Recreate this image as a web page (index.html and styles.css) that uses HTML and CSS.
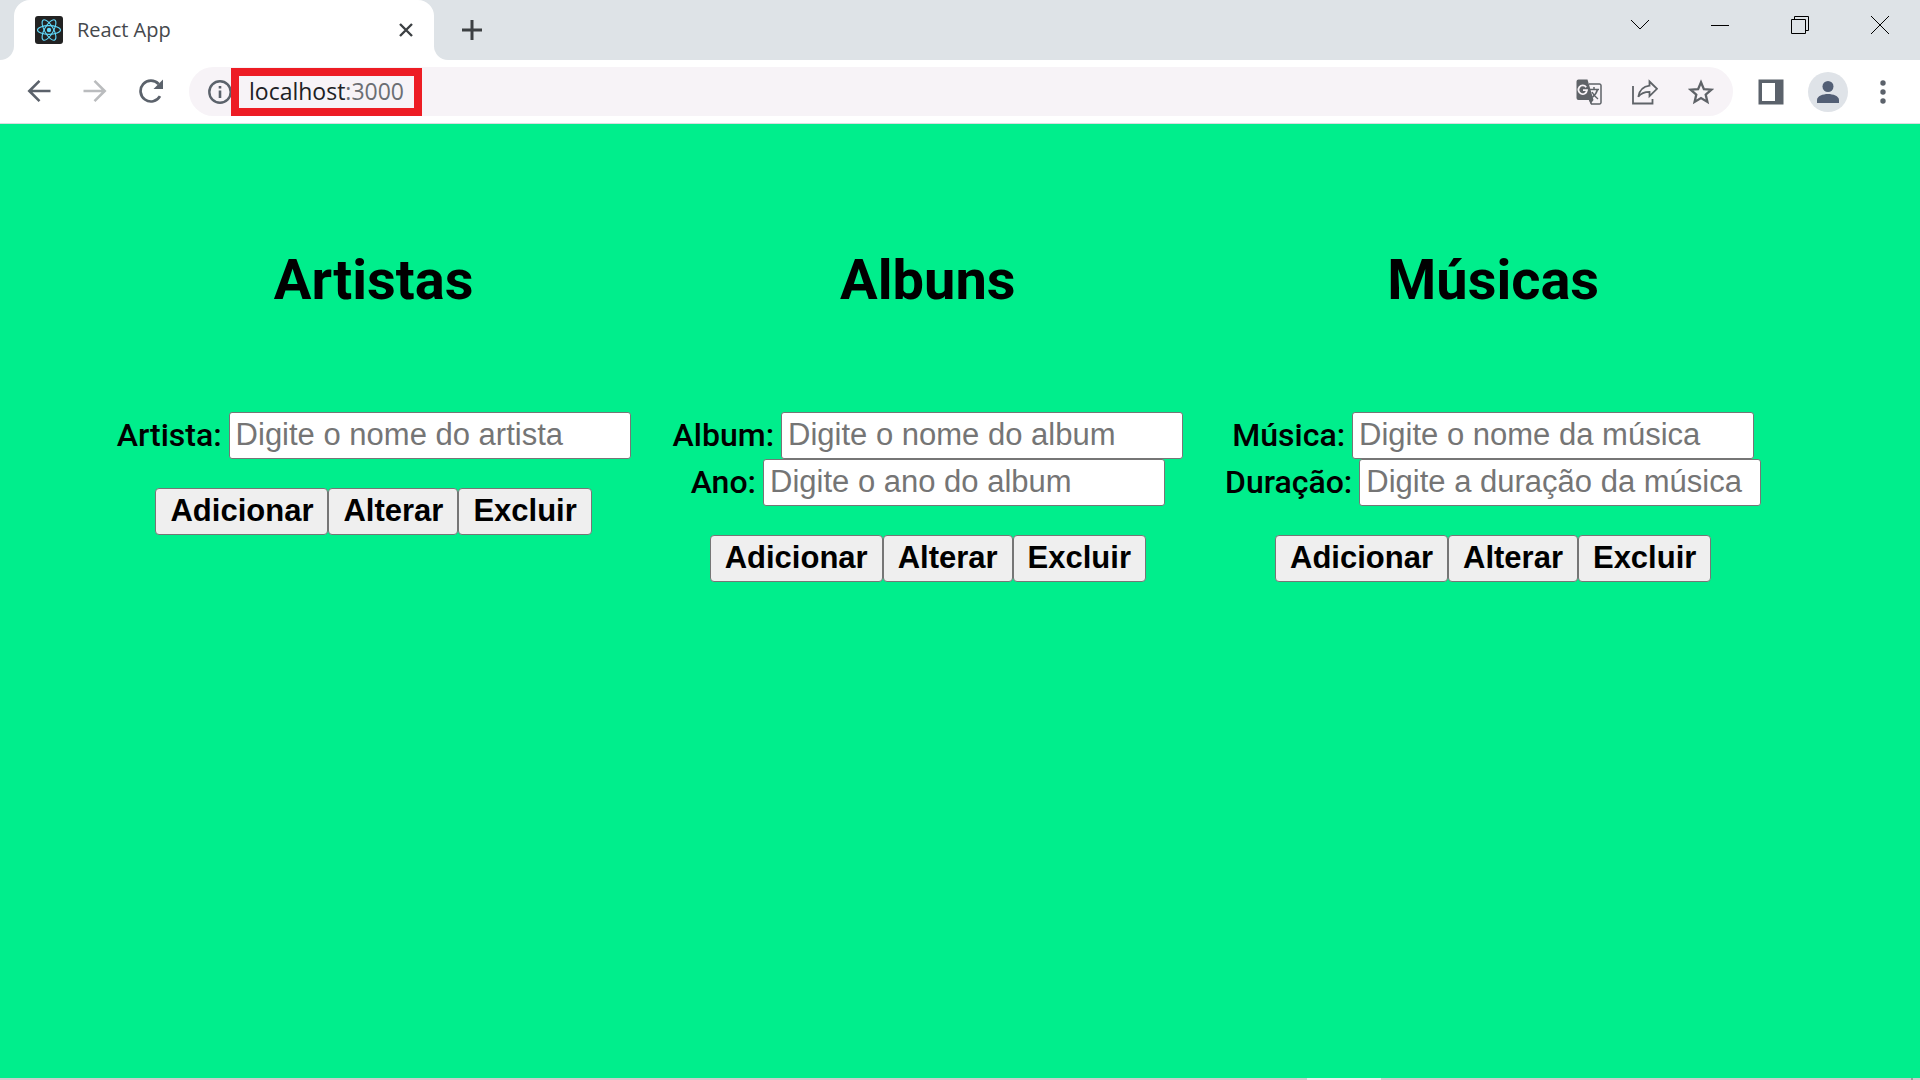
FILE: index.html
```html
<!DOCTYPE html>
<html lang="pt-BR">
<head>
<meta charset="utf-8">
<title>React App</title>
<link rel="stylesheet" href="styles.css">
</head>
<body>
<div class="browser">
  <header class="tabstrip">
    <div class="tab-edge"></div>
    <div class="tab">
      <svg class="favicon" viewBox="0 0 28 28" aria-hidden="true">
        <rect width="28" height="28" rx="3" fill="#222"/>
        <g fill="none" stroke="#61dafb" stroke-width="1.1">
          <ellipse cx="14" cy="14" rx="11.5" ry="4.4"/>
          <ellipse cx="14" cy="14" rx="11.5" ry="4.4" transform="rotate(60 14 14)"/>
          <ellipse cx="14" cy="14" rx="11.5" ry="4.4" transform="rotate(120 14 14)"/>
        </g>
        <circle cx="14" cy="14" r="2.2" fill="#61dafb"/>
      </svg>
      <span class="tab-title">React App</span>
      <button class="icon-button" aria-label="Fechar guia">
        <svg width="14" height="14" viewBox="0 0 14 14"><path d="M1 1l12 12M13 1L1 13" stroke="#3c4043" stroke-width="2.4" fill="none"/></svg>
      </button>
    </div>
    <button class="icon-button new-tab" aria-label="Nova guia">
      <svg width="22" height="22" viewBox="0 0 22 22"><path d="M11 1v20M1 11h20" stroke="#3c4043" stroke-width="3" fill="none"/></svg>
    </button>
    <div class="window-controls">
      <button class="icon-button" aria-label="Pesquisar guias"><svg width="20" height="20" viewBox="0 0 20 20"><path d="M1 5l9 9 9-9" stroke="#000" fill="none"/></svg></button>
      <button class="icon-button" aria-label="Minimizar"><svg width="20" height="20" viewBox="0 0 20 20"><path d="M1 10.500h18" stroke="#000" fill="none"/></svg></button>
      <button class="icon-button" aria-label="Restaurar"><svg width="20" height="20" viewBox="0 0 20 20"><path d="M1.500 4.500h14v14h-14zM4.500 4.500v-3h14v14h-3" stroke="#000" fill="none"/></svg></button>
      <button class="icon-button" aria-label="Fechar"><svg width="20" height="20" viewBox="0 0 20 20"><path d="M1 1l18 18M19 1L1 19" stroke="#000" fill="none"/></svg></button>
    </div>
  </header>
  <nav class="toolbar">
    <div class="nav-buttons">
      <button class="icon-button" aria-label="Voltar"><svg width="24" height="24" viewBox="0 0 24 24"><path d="M23.500 12H2.500M12.500 1.800L2.300 12l10.200 10.200" stroke="#5b626b" stroke-width="2.600" fill="none"/></svg></button>
      <button class="icon-button" aria-label="Avançar"><svg width="24" height="24" viewBox="0 0 24 24"><path d="M.5 12h21M11.500 1.800L21.700 12 11.500 22.200" stroke="#babcbe" stroke-width="2.600" fill="none"/></svg></button>
      <button class="icon-button" aria-label="Atualizar"><svg width="24" height="24" viewBox="0 0 24 24"><path d="M21 17.200A10.400 10.400 0 1 1 19.600 5" stroke="#5b626b" stroke-width="2.700" fill="none"/><path d="M24 .5V10h-9.500z" fill="#5b626b"/></svg></button>
    </div>
    <div class="omnibox">
      <svg class="info" width="24" height="24" viewBox="0 0 24 24" aria-hidden="true"><circle cx="12" cy="12" r="10.700" stroke="#5b626b" stroke-width="2.400" fill="none"/><path d="M12 10.500v7.500M12 6v2.600" stroke="#5b626b" stroke-width="2.600"/></svg>
      <div class="url"><span class="host">localhost</span>:3000</div>
      <div class="page-actions">
        <button class="icon-button" aria-label="Traduzir"><svg width="26" height="26" viewBox="0 0 26 26"><path d="M13 5h10.500a1.500 1.500 0 0 1 1.500 1.500v17a1.500 1.500 0 0 1-1.500 1.500H15.500l-2-4" fill="none" stroke="#5f6368" stroke-width="1.500"/><path d="M2.500.5h9L17.500 21h-15A2 2 0 0 1 .5 19V2.500a2 2 0 0 1 2-2z" fill="#5f6368"/><path d="M13.500 21h4l-3 4z" fill="#5f6368"/><path d="M10.200 8.200A4.300 4.300 0 1 0 11 11.200H7" fill="none" stroke="#f7f3f7" stroke-width="1.800"/><path d="M14 10.500h9M18 8v2.500M21.500 10.500c-.8 3.500-3 6-5.200 7.800M16 13c1.500 3 3.200 5 6 7" fill="none" stroke="#5f6368" stroke-width="1.500"/></svg></button>
        <button class="icon-button" aria-label="Compartilhar"><svg width="26" height="26" viewBox="0 0 26 26"><path d="M1 7v17.500h19.500V20" fill="none" stroke="#5f6368" stroke-width="1.800"/><path d="M17.500 2.500l7.500 7.300-7.500 7.300v-4.200c-5 0-8.500 1.300-11.200 4.900C7.300 12 11 7.500 17.500 6.700z" fill="none" stroke="#5f6368" stroke-width="1.800"/></svg></button>
        <button class="icon-button" aria-label="Favoritar"><svg width="26" height="26" viewBox="0 0 26 26"><path d="M13 3.200l2.900 6.900 7.500.6-5.700 4.900 1.700 7.300-6.400-3.900-6.400 3.900 1.700-7.300-5.700-4.900 7.500-.6z" fill="none" stroke="#5f6368" stroke-width="2.300"/></svg></button>
      </div>
    </div>
    <div class="browser-actions">
      <button class="icon-button" aria-label="Painel lateral"><svg width="26" height="26" viewBox="0 0 26 26"><path fill-rule="evenodd" d="M.5.500h25v25H.5zM4 4v18h13V4z" fill="#5b626b"/></svg></button>
      <button class="icon-button avatar" aria-label="Perfil"><svg width="22" height="22" viewBox="0 0 22 22"><circle cx="11" cy="5.500" r="5.500" fill="#535f75"/><path d="M0 22v-3c0-4 6-6 11-6s11 2 11 6v3z" fill="#535f75"/></svg></button>
      <button class="icon-button menu" aria-label="Menu"><svg width="6" height="24" viewBox="0 0 6 24"><g fill="#5b626b"><circle cx="3" cy="3" r="2.700"/><circle cx="3" cy="12" r="2.700"/><circle cx="3" cy="21" r="2.700"/></g></svg></button>
    </div>
  </nav>
  <main class="page">
    <section class="form">
      <h1>Artistas</h1>
      <div class="field"><label for="artista">Artista:</label><input id="artista" type="text" placeholder="Digite o nome do artista"></div>
      <div class="actions"><button>Adicionar</button><button>Alterar</button><button>Excluir</button></div>
    </section>
    <section class="form">
      <h1>Albuns</h1>
      <div class="field"><label for="album">Album:</label><input id="album" type="text" placeholder="Digite o nome do album"></div>
      <div class="field"><label for="ano">Ano:</label><input id="ano" type="text" placeholder="Digite o ano do album"></div>
      <div class="actions"><button>Adicionar</button><button>Alterar</button><button>Excluir</button></div>
    </section>
    <section class="form">
      <h1>Músicas</h1>
      <div class="field"><label for="musica">Música:</label><input id="musica" type="text" placeholder="Digite o nome da música"></div>
      <div class="field"><label for="duracao">Duração:</label><input id="duracao" type="text" placeholder="Digite a duração da música"></div>
      <div class="actions"><button>Adicionar</button><button>Alterar</button><button>Excluir</button></div>
    </section>
  </main>
  <footer class="taskbar"><div class="task-active"></div><div class="task-peek"></div></footer>
</div>
</body>
</html>
```
FILE: styles.css
```css
* { box-sizing: border-box; }
body { margin: 0; font-family: Roboto, sans-serif; }
.browser { display: flex; flex-direction: column; min-height: 100vh; }

.icon-button {
  display: flex; align-items: center; justify-content: center;
  padding: 0; border: 0; background: none;
}
.icon-button svg { display: block; }

.tabstrip { display: flex; height: 60px; background: #dee3e7; }
.tab-edge { width: 14px; background: #fff; }
.tab-edge::before {
  content: ""; display: block; height: 60px;
  background: #dee3e7; border-bottom-right-radius: 14px;
}
.tab {
  display: flex; align-items: center; gap: 14px; width: 420px;
  padding: 0 21px; background: #fff; border-radius: 16px 16px 0 0;
}
.favicon { width: 28px; height: 28px; }
.tab-title {
  flex: 1; padding-bottom: 2px; color: #45484c;
  font-family: "Open Sans", sans-serif; font-size: 20px; font-weight: 400;
}
.new-tab { width: 76px; background: linear-gradient(#fff, #fff) left bottom / 14px 14px no-repeat; position: relative; }
.new-tab::before {
  content: ""; position: absolute; left: 0; bottom: 0; width: 14px; height: 14px;
  background: #dee3e7; border-bottom-left-radius: 14px;
}
.window-controls { display: flex; height: 50px; margin-left: auto; }
.window-controls .icon-button { width: 80px; }

.toolbar {
  display: flex; align-items: center; height: 64px;
  padding: 0 34px 0 27px; border-bottom: 1px solid #dadce0; background: #fff;
}
.nav-buttons { display: flex; gap: 32px; width: 162px; padding-bottom: 2px; }
.omnibox {
  display: flex; flex: 1; align-items: center; height: 49px;
  padding: 0 19px; border-radius: 25px; background: #f7f3f7;
}
.url {
  height: 48px; padding: 0 10px; margin-left: -1px; z-index: 1;
  border: 8px solid #ed1c24; color: #6b6e73; background: #f7f3f7;
  font-family: "Open Sans", sans-serif; font-size: 23px; line-height: 30px;
}
.host { color: #202124; }
.page-actions { display: flex; gap: 30px; margin-left: auto; }
.browser-actions { display: flex; align-items: center; gap: 24px; margin-left: 25px; }
.avatar { width: 40px; height: 40px; border-radius: 50%; background: #dfe3e8; }
.menu { margin-left: 8px; }

.page {
  display: flex; flex: 1; justify-content: center; align-items: flex-start;
  background: #00ee8c;
}
.form { margin-right: 42px; text-align: center; }
.form h1 { margin: 120px 0 96px; font-size: 56px; line-height: 72px; font-weight: 700; }
.field { display: flex; align-items: center; justify-content: center; gap: 7px; }
.field label { font-size: 32px; line-height: 36px; padding-bottom: 2px; font-weight: 500; }
.field input {
  width: 402px; height: 47px; padding: 0 6px 2px;
  border: 1px solid #767676; border-radius: 3px; background: #fff;
  font-family: "Liberation Sans", sans-serif; font-size: 31px;
}
.field input::placeholder { color: #757575; }
.actions { display: flex; justify-content: center; margin-top: 29px; }
.actions button {
  height: 47px; padding: 0 14px 2px;
  border: 1px solid #767676; border-radius: 4px; background: #efefef; color: #000;
  font-family: "Liberation Sans", sans-serif; font-size: 31px; font-weight: 700; line-height: 36px;
}

.taskbar { display: flex; height: 2px; background: #ccc; }
.task-active { width: 74px; margin-left: auto; background: #eee; }
.task-peek { width: 2px; margin: 0 7px 0 530px; background: #999; }
```
